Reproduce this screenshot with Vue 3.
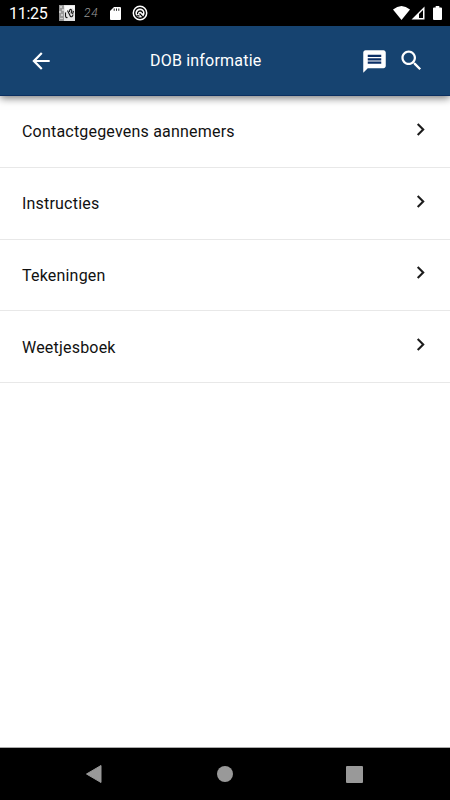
<script setup>
const items = ['Contactgegevens aannemers', 'Instructies', 'Tekeningen', 'Weetjesboek']
</script>

<template>
  <div class="screen">
    <div class="status">
      <span class="clock">11:25</span>
      <svg class="thumb" width="16" height="16" viewBox="0 0 16 16">
        <rect width="16" height="16" fill="#e4e4e4" />
        <path d="M0 0h5v16H0z" fill="#999" />
        <path d="M1 1h2v2H1zM3 4h2v2H3zM0 6h2v2H0zM2 9h2v2H2zM1 13h3v1H1z" fill="#ccc" />
        <path d="M5.500 1h10v4l-2-2-3 1-4 3z" fill="#fafafa" />
        <path d="M6.500 7.500v3q0 2.500 2 2M8.500 5.500l3 6q2 1 2.500-2M10.500 7q0-3 1.500-2.500t0 4M14.500 6l-1 3" fill="none" stroke="#161616" stroke-width="1.100" />
      </svg>
      <span class="degree">24</span>
      <svg class="sd" width="11" height="13" viewBox="0 0 11 13">
        <path d="M4 0h6q1 0 1 1v11q0 1-1 1H1q-1 0-1-1V4z" fill="#fff" />
        <path d="M4.200 1.500v2.300M6.500 1.500v2.300M8.800 1.500v2.300" stroke="#222" stroke-width="1" />
      </svg>
      <svg class="ring" width="16" height="16" viewBox="0 0 16 16">
        <circle cx="8" cy="8" r="6.700" fill="none" stroke="#fff" stroke-width="1.500" />
        <circle cx="8" cy="8" r="4.600" fill="#fff" />
        <path d="M5.500 9.300Q5.300 6 8.300 5.800q2.200.2 2.200 2.400M7.500 8.500l3.300 3.300M4.500 10.800h3" fill="none" stroke="#000" stroke-width="1.200" />
      </svg>
      <svg class="wifi" width="17" height="14" viewBox="0 0 17 14">
        <path d="M0 3.500Q8.500-3.500 17 3.500L8.500 14z" fill="#fff" />
      </svg>
      <svg class="signal" width="14" height="14" viewBox="0 0 14 14">
        <path fill-rule="evenodd" d="M13.500.5v13H.5zM12 4L8 8V12H12z" fill="#fff" />
      </svg>
      <svg class="battery" width="9" height="14" viewBox="0 0 9 14">
        <path d="M2.700 0h3.600v1.500H8q1 0 1 1V13q0 1-1 1H1q-1 0-1-1V2.500q0-1 1-1h1.700z" fill="#fff" />
      </svg>
    </div>

    <header class="header">
      <svg class="back" width="26" height="26" viewBox="0 0 24 24" fill="#fff">
        <path d="M20 11H7.830l5.590-5.590L12 4l-8 8 8 8 1.410-1.410L7.830 13H20z" />
      </svg>
      <h1>DOB informatie</h1>
      <svg class="message" width="27" height="27" viewBox="0 0 24 24" fill="#fff">
        <path d="M20 2H4c-1.100 0-1.990.9-1.990 2L2 22l4-4h14c1.100 0 2-.9 2-2V4c0-1.100-.9-2-2-2z" />
        <path d="M6 6h12v2H6zM6 9h12v2H6zM6 12h12v2H6z" fill="#0b2f66" />
      </svg>
      <svg class="search" width="27" height="27" viewBox="0 0 24 24" fill="#fff">
        <path d="M15.500 14h-.79l-.28-.27C15.410 12.590 16 11.110 16 9.500 16 5.910 13.090 3 9.500 3S3 5.910 3 9.500 5.910 16 9.500 16c1.610 0 3.090-.59 4.230-1.570l.27.28v.79l5 4.990L20.490 19l-4.990-5zm-6 0C7.010 14 5 11.990 5 9.500S7.010 5 9.500 5 14 7.010 14 9.500 11.990 14 9.500 14z" />
      </svg>
    </header>

    <ul class="list">
      <li v-for="item in items" :key="item">
        <span>{{ item }}</span>
        <svg width="25" height="25" viewBox="0 0 24 24" fill="#1c1c1c">
          <path d="M10 6L8.590 7.410 13.170 12l-4.580 4.590L10 18l6-6z" />
        </svg>
      </li>
    </ul>

    <nav class="nav">
      <svg width="17" height="20" viewBox="0 0 17 20"><path d="M15 1.500v17L.5 10z" fill="#999" stroke="#999" stroke-linejoin="round" /></svg>
      <svg width="16" height="16" viewBox="0 0 16 16"><circle cx="8" cy="8" r="8" fill="#999" /></svg>
      <svg width="17" height="17" viewBox="0 0 17 17"><rect width="17" height="17" rx="1" fill="#999" /></svg>
    </nav>
  </div>
</template>

<style>
body {
  margin: 0;
  background: #fff;
}
</style>

<style scoped>
.screen {
  display: flex;
  flex-direction: column;
  width: 450px;
  height: 800px;
  overflow: hidden;
  background: #fff;
  font-family: Roboto, sans-serif;
}
svg {
  display: block;
  flex: none;
}
.status {
  display: flex;
  align-items: center;
  box-sizing: border-box;
  height: 26px;
  padding: 0 9px;
  background: #000;
  color: #fff;
  flex: none;
}
.clock {
  width: 50px;
  font-size: 16px;
  letter-spacing: -0.3px;
  line-height: 26px;
  padding-top: 2px;
}
.degree {
  width: 26px;
  margin-left: 9px;
  color: #999;
  font-size: 12px;
  font-style: italic;
  font-weight: 300;
  letter-spacing: 0.8px;
}
.ring {
  margin-left: 10.5px;
}
.wifi {
  margin-left: auto;
}
.signal {
  margin-left: 1px;
}
.battery {
  margin: 0 -1px 0 8px;
}
.header {
  display: flex;
  align-items: center;
  box-sizing: border-box;
  height: 70px;
  padding: 0 25px 0 28.4px;
  background: #164370;
  border-bottom: 1px solid #0b2f60;
  box-shadow: 0 2px 8px rgba(0, 0, 0, 0.55);
  color: #fff;
  flex: none;
}
.header h1 {
  margin: 0 0 0 95.6px;
  font-size: 16px;
  font-weight: 400;
  letter-spacing: 0.2px;
  line-height: 24px;
  flex: 1;
}
.message {
  margin: 1px 10px 0 0;
}
.list {
  list-style: none;
  margin: 0;
  padding: 0;
  flex: 1;
}
.list li {
  display: flex;
  align-items: center;
  justify-content: space-between;
  box-sizing: border-box;
  height: 71.75px;
  padding: 0 17px 0 22px;
  border-bottom: 1px solid #e8e8e8;
  color: #111;
  font-size: 16px;
  letter-spacing: 0.2px;
}
.list span {
  padding-top: 1px;
}
.list svg {
  margin-bottom: 4px;
}
.nav {
  display: flex;
  align-items: center;
  justify-content: space-between;
  box-sizing: border-box;
  height: 53px;
  padding: 0 87px 0 86px;
  background: #000;
  border-top: 1px solid #aaa;
  flex: none;
}
</style>
